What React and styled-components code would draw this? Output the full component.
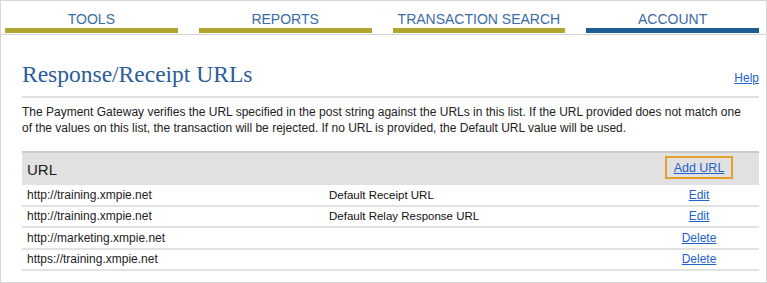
import React from 'react';
import styled, { createGlobalStyle } from 'styled-components';

const GlobalStyle = createGlobalStyle`
    body {
        margin: 0;
        background: #ffffff;
        font-family: "Liberation Sans", Arial, sans-serif;
    }
`

const Frame = styled.div`
    box-sizing: border-box;
    width: 767px;
    height: 283px;
    border: 1px solid #d6d6d6;
    overflow: hidden;
`

const NavBar = styled.nav`
    display: flex;
    gap: 21px;
    padding: 9px 7px 1px 4px;
    border-bottom: 1px solid #d2d2d2;
`

const Tab = styled.div`
    flex: 1;
    text-align: center;
    font-size: 14px;
    line-height: 18px;
    color: #3a6ca6;
    border-bottom: 5px solid ${({ active }) => (active ? '#1d5d93' : '#b3a630')};
`

const Content = styled.div`
    padding: 0 7px 0 21px;
`

const TitleRow = styled.div`
    display: flex;
    justify-content: space-between;
    align-items: baseline;
    margin-top: 25px;
    padding-bottom: 8px;
    border-bottom: 2px solid #e0e0e0;
`

const Title = styled.h1`
    margin: 0;
    font-family: "Liberation Serif", "Times New Roman", serif;
    font-weight: normal;
    font-size: 23.5px;
    line-height: 28px;
    color: #2b5e98;
`

const Link = styled.a`
    font-size: ${({ size }) => size || '12px'};
    color: #2363cc;
    text-decoration: underline;
    cursor: pointer;
`

const Description = styled.p`
    margin: 6px 0 15px;
    padding-right: 15px;
    font-size: 12px;
    line-height: 16px;
    color: #222;
`

const Table = styled.div`
    display: grid;
    grid-template-columns: 302px 1fr 120px;
`

const HeaderCell = styled.div`
    display: flex;
    align-items: center;
    justify-content: ${({ center }) => (center ? 'center' : 'flex-start')};
    height: 32px;
    padding-left: ${({ center }) => (center ? '0' : '5px')};
    background: #e1e1e1;
    border-top: 2px solid #cacaca;
    font-size: 15px;
    color: #222;
`

const AddBox = styled.div`
    box-sizing: border-box;
    width: 68px;
    height: 23px;
    border: 2px solid #e5a02c;
    display: flex;
    align-items: center;
    justify-content: center;
    margin-top: -3px;
`

const Cell = styled.div`
    display: flex;
    align-items: center;
    justify-content: ${({ center }) => (center ? 'center' : 'flex-start')};
    height: 19.5px;
    padding-left: ${({ center }) => (center ? '0' : '5px')};
    border-bottom: 2px solid #e2e2e2;
    font-size: ${({ small }) => (small ? '11.5px' : '12px')};
    color: ${({ small }) => (small ? '#111' : '#222')};
    white-space: nowrap;
`

const tabs = [
    { label: 'TOOLS' },
    { label: 'REPORTS' },
    { label: 'TRANSACTION SEARCH' },
    { label: 'ACCOUNT', active: true },
];

const rows = [
    { url: 'http://training.xmpie.net', type: 'Default Receipt URL', action: 'Edit' },
    { url: 'http://training.xmpie.net', type: 'Default Relay Response URL', action: 'Edit' },
    { url: 'http://marketing.xmpie.net', type: '', action: 'Delete' },
    { url: 'https://training.xmpie.net', type: '', action: 'Delete' },
];

const App = () => {
    return (
        <Frame>
            <GlobalStyle />
            <NavBar>
                {tabs.map((tab) => (
                    <Tab key={tab.label} active={tab.active}>{tab.label}</Tab>
                ))}
            </NavBar>
            <Content>
                <TitleRow>
                    <Title>Response/Receipt URLs</Title>
                    <Link>Help</Link>
                </TitleRow>
                <Description>
                    The Payment Gateway verifies the URL specified in the post string against the URLs in this list. If the URL provided does not match one of the values on this list, the transaction will be rejected. If no URL is provided, the Default URL value will be used.
                </Description>
                <Table>
                    <HeaderCell>URL</HeaderCell>
                    <HeaderCell />
                    <HeaderCell center>
                        <AddBox>
                            <Link size="12.5px">Add URL</Link>
                        </AddBox>
                    </HeaderCell>
                    {rows.map((row, i) => (
                        <React.Fragment key={i}>
                            <Cell>{row.url}</Cell>
                            <Cell small>{row.type}</Cell>
                            <Cell center><Link>{row.action}</Link></Cell>
                        </React.Fragment>
                    ))}
                </Table>
            </Content>
        </Frame>
    )
}

export default App;
